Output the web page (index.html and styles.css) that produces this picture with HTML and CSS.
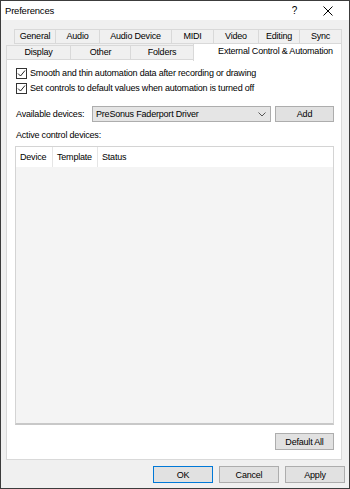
FILE: index.html
```html
<!DOCTYPE html>
<html>
<head>
    <title>Preferences</title>
    <link rel="stylesheet" href="styles.css">
</head>
<body>
    <div class="window">
        <div class="titlebar">
            <span class="title">Preferences</span>
            <span class="help">?</span>
            <svg class="close" width="10" height="10" viewBox="0 0 10 10">
                <path d="M0.5 0.5 L9.5 9.5 M9.5 0.5 L0.5 9.5" stroke="#000" stroke-width="1" fill="none"/>
            </svg>
        </div>

        <div class="tabs">
            <div class="tab-row row1">
                <div class="tab w-general">General</div>
                <div class="tab w-audio">Audio</div>
                <div class="tab w-device">Audio Device</div>
                <div class="tab w-midi">MIDI</div>
                <div class="tab w-video">Video</div>
                <div class="tab w-editing">Editing</div>
                <div class="tab w-sync">Sync</div>
            </div>
            <div class="tab-row row2">
                <div class="tab w-display">Display</div>
                <div class="tab w-other">Other</div>
                <div class="tab w-folders">Folders</div>
                <div class="tab active w-external">External Control &amp; Automation</div>
            </div>
        </div>

        <div class="panel">
            <label class="check-row">
                <span class="checkbox">
                    <svg width="9" height="9" viewBox="0 0 9 9"><polyline points="1,4.5 3.5,7 8,1.5" fill="none" stroke="#222" stroke-width="1"/></svg>
                </span>
                Smooth and thin automation data after recording or drawing
            </label>
            <label class="check-row">
                <span class="checkbox">
                    <svg width="9" height="9" viewBox="0 0 9 9"><polyline points="1,4.5 3.5,7 8,1.5" fill="none" stroke="#222" stroke-width="1"/></svg>
                </span>
                Set controls to default values when automation is turned off
            </label>

            <div class="device-row">
                <span class="label">Available devices:</span>
                <div class="select">
                    <span>PreSonus Faderport Driver</span>
                    <svg width="8" height="5" viewBox="0 0 8 5"><polyline points="0.5,0.5 4,4 7.5,0.5" fill="none" stroke="#555" stroke-width="1"/></svg>
                </div>
                <button class="btn btn-add">Add</button>
            </div>

            <div class="label list-label">Active control devices:</div>

            <div class="list">
                <div class="list-header">
                    <div class="col col-device">Device</div>
                    <div class="col col-template">Template</div>
                    <div class="col col-status">Status</div>
                </div>
                <div class="list-body"></div>
            </div>

            <div class="panel-buttons">
                <button class="btn btn-default">Default All</button>
            </div>
        </div>

        <div class="footer">
            <button class="btn btn-ok">OK</button>
            <button class="btn">Cancel</button>
            <button class="btn">Apply</button>
        </div>
    </div>
</body>
</html>
```

FILE: styles.css
```css
* {
    box-sizing: border-box;
}

body {
    margin: 0;
    font-family: "Liberation Sans", Arial, sans-serif;
    font-size: 9px;
    letter-spacing: -0.2px;
    color: #000;
}

.window {
    width: 350px;
    height: 489px;
    border: 1px solid #3c3c3c;
    background-color: #f0f0f0;
    display: flex;
    flex-direction: column;
}

.titlebar {
    height: 19px;
    background-color: #fff;
    display: flex;
    align-items: center;
    padding: 0 16px 0 4px;
}

.title {
    font-size: 9.5px;
    flex: 1;
}

.help {
    font-size: 10px;
    margin-right: 26px;
}

/* tabs */
.tabs {
    margin-top: 9px;
}

.tab-row {
    display: flex;
    align-items: flex-end;
}

.row1 {
    margin-left: 13px;
}

.row2 {
    margin-left: 5px;
    margin-top: -1px;
}

.tab {
    height: 15px;
    border: 1px solid #d9d9d9;
    background-color: #f0f0f0;
    text-align: center;
    line-height: 13px;
    margin-left: -1px;
}

.tab:first-child {
    margin-left: 0;
}

.tab.active {
    height: 18px;
    background-color: #fff;
    border-bottom: none;
    margin-bottom: -1px;
    position: relative;
    z-index: 1;
    line-height: 14px;
    padding-left: 16px;
}

.w-general { width: 42px; }
.w-audio { width: 45px; }
.w-device { width: 73px; }
.w-midi { width: 43px; }
.w-video { width: 46px; }
.w-editing { width: 42px; }
.w-sync { width: 43px; }

.w-display { width: 65px; }
.w-other { width: 61px; }
.w-folders { width: 64px; }
.w-external { width: 149px; }

/* page */
.panel {
    margin-left: 5px;
    width: 336px;
    height: 401px;
    margin-top: -1px;
    background-color: #fff;
    border: 1px solid #d9d9d9;
    padding: 7px 7px 9px 8px;
    display: flex;
    flex-direction: column;
}

.check-row {
    display: flex;
    align-items: center;
    height: 12px;
    margin-bottom: 3px;
    padding-left: 1px;
}

.checkbox {
    width: 11px;
    height: 11px;
    border: 1px solid #333;
    margin-right: 3px;
    display: flex;
    align-items: center;
    justify-content: center;
    background-color: #fff;
}

.device-row {
    display: flex;
    align-items: center;
    margin-top: 9px;
    height: 16px;
    padding-left: 1px;
}

.device-row .label {
    width: 76px;
}

.select {
    width: 179px;
    height: 16px;
    border: 1px solid #adadad;
    background-color: #e5e5e5;
    display: flex;
    align-items: center;
    justify-content: space-between;
    padding: 0 4px 0 3px;
}

.btn {
    font-family: inherit;
    font-size: 9px;
    letter-spacing: -0.2px;
    color: #000;
    background-color: #e1e1e1;
    border: 1px solid #adadad;
    height: 17px;
    width: 59px;
    padding: 0;
}

.btn-add {
    height: 16px;
    margin-left: 4px;
}

.list-label {
    margin-top: 7px;
    height: 12px;
    line-height: 12px;
    padding-left: 1px;
}

.list {
    flex: 1;
    margin-top: 5px;
    border: 1px solid #d4d4d4;
    border-bottom: 2px solid #c8c8c8;
    display: flex;
    flex-direction: column;
}

.list-header {
    display: flex;
    height: 20px;
    background-color: #fff;
}

.col {
    line-height: 20px;
    padding-left: 4px;
    border-right: 1px solid #e5e5e5;
}

.col-device { width: 37px; }
.col-template { width: 45px; }
.col-status { flex: 1; border-right: none; }

.list-body {
    flex: 1;
    background-color: #f4f4f4;
}

.panel-buttons {
    display: flex;
    justify-content: flex-end;
    margin-top: 8px;
}

.footer {
    display: flex;
    justify-content: flex-end;
    gap: 6px;
    padding: 6px 4px 0 0;
}

.footer .btn {
    width: 60px;
    height: 17px;
}

.footer .btn-ok {
    border-color: #0078d7;
}
```
